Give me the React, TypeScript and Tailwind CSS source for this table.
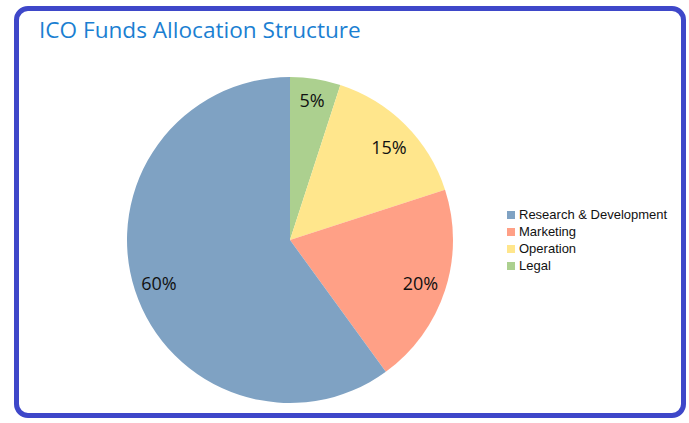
import React from "react";

export default function App() {
  const legend = [
    { label: "Research & Development", color: "bg-[#7fa2c3]" },
    { label: "Marketing", color: "bg-[#ffa086]" },
    { label: "Operation", color: "bg-[#ffe68c]" },
    { label: "Legal", color: "bg-[#acd08f]" },
  ];
  return (
    <div className="w-[689px] h-[423px] bg-white pl-[14px] pt-[6px]">
      <div className="w-[672px] h-[412px] border-[5px] border-[#3e47c9] rounded-[14px] bg-white flex flex-col">
        <div className="pl-[20px] pt-[4px] text-[22.6px] leading-[30px] text-[#1b7fd2] font-['Open_Sans',sans-serif]">
          ICO Funds Allocation Structure
        </div>
        <div className="flex flex-row items-center mt-[30px]">
          <svg width="330" height="330" viewBox="0 0 330 330" className="ml-[106px] shrink-0">
            <path d="M165 165 L165 2 A163 163 0 0 1 215.37 9.97 Z" fill="#acd08f" />
            <path d="M165 165 L215.37 9.97 A163 163 0 0 1 320.03 114.63 Z" fill="#ffe68c" />
            <path d="M165 165 L320.03 114.63 A163 163 0 0 1 260.81 296.87 Z" fill="#ffa086" />
            <path d="M165 165 L260.81 296.87 A163 163 0 1 1 165 2 Z" fill="#7fa2c3" />
            <g fontFamily="'Open Sans', sans-serif" fontSize="18" fill="#111111" textAnchor="middle">
              <text x="187" y="32">5%</text>
              <text x="264" y="79">15%</text>
              <text x="295.5" y="215">20%</text>
              <text x="34" y="215">60%</text>
            </g>
          </svg>
          <div className="ml-[52px] flex flex-col font-['Liberation_Sans',Arial,sans-serif] text-[13px] leading-[17px] text-[#111111]">
            {legend.map((l) => (
              <div key={l.label} className="flex flex-row items-center gap-[4px]">
                <span className={`w-[8px] h-[8px] ${l.color}`} />
                <span>{l.label}</span>
              </div>
            ))}
          </div>
        </div>
      </div>
    </div>
  );
}
